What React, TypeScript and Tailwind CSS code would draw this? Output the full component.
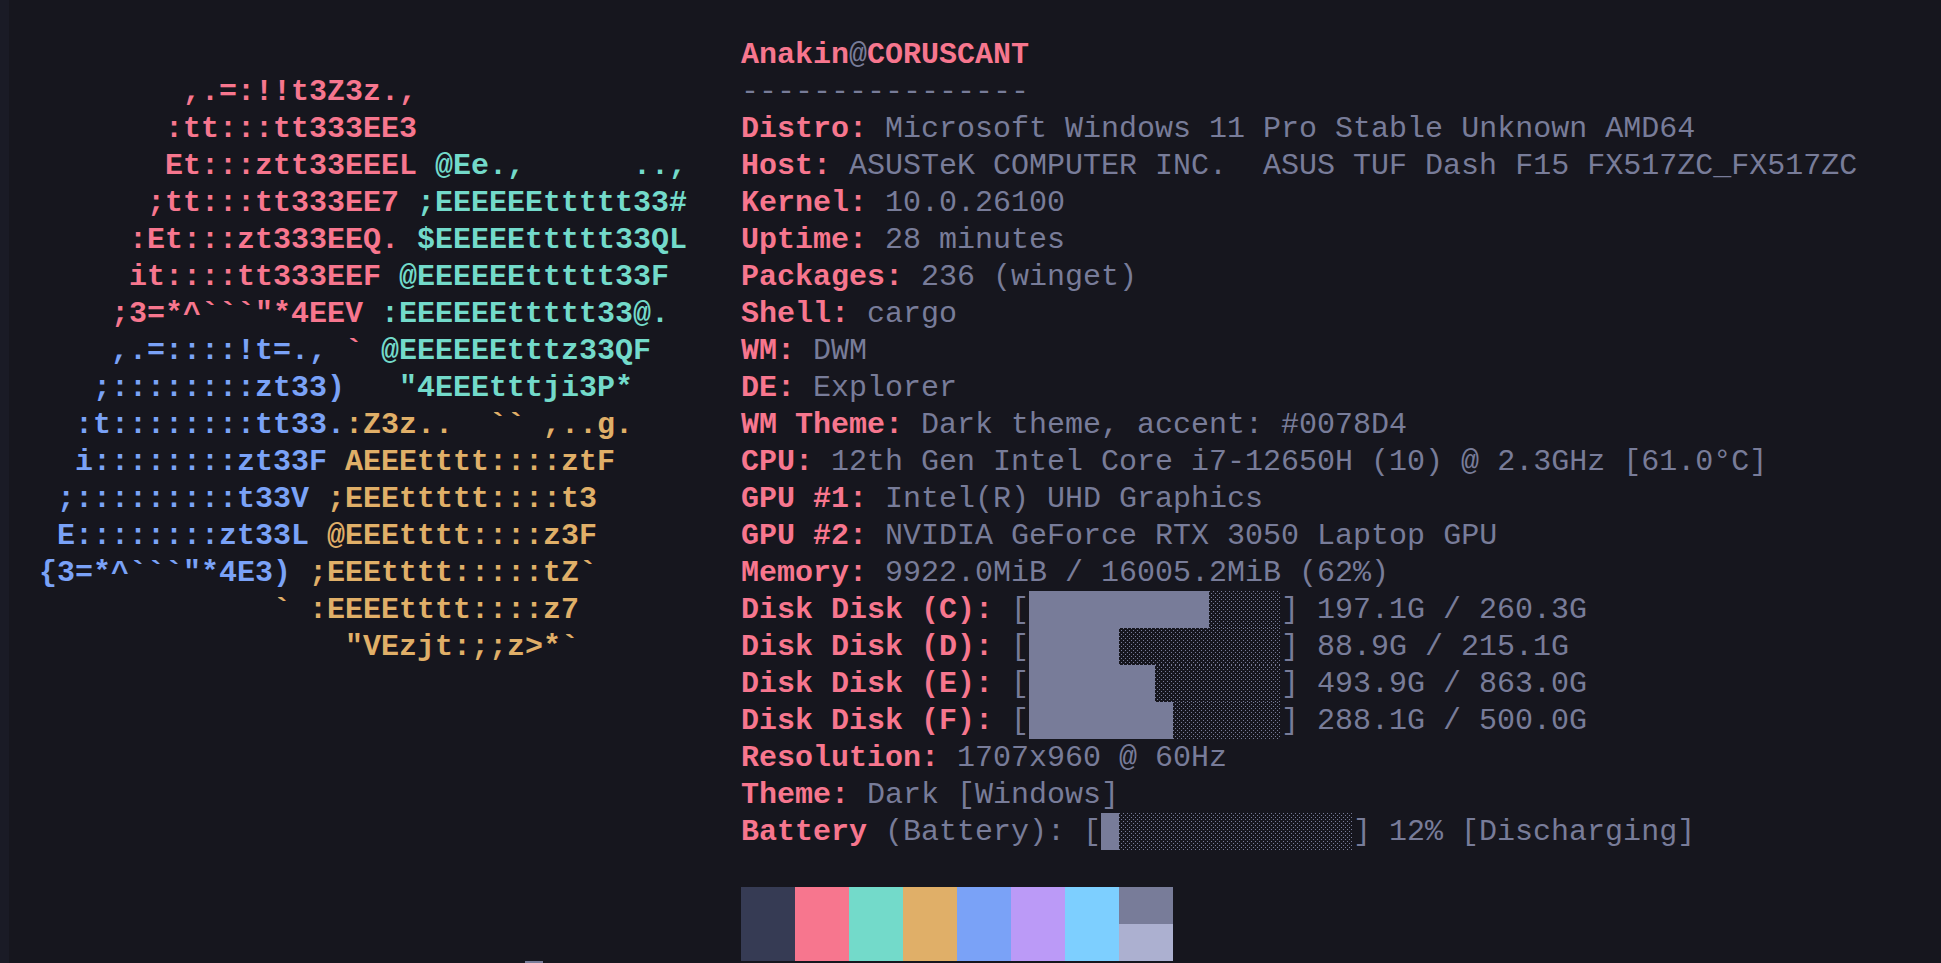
const mono = "font-['Liberation_Mono','DejaVu_Sans_Mono',monospace]";

const logo: { color: string; text: string }[][] = [
  [{ color: 'text-[#f7768e]', text: '        ,.=:!!t3Z3z.,' }],
  [{ color: 'text-[#f7768e]', text: '       :tt:::tt333EE3' }],
  [{ color: 'text-[#f7768e]', text: '       Et:::ztt33EEEL' }, { color: 'text-[#73daca]', text: ' @Ee.,      ..,' }],
  [{ color: 'text-[#f7768e]', text: '      ;tt:::tt333EE7' }, { color: 'text-[#73daca]', text: ' ;EEEEEEttttt33#' }],
  [{ color: 'text-[#f7768e]', text: '     :Et:::zt333EEQ.' }, { color: 'text-[#73daca]', text: ' $EEEEEttttt33QL' }],
  [{ color: 'text-[#f7768e]', text: '     it::::tt333EEF' }, { color: 'text-[#73daca]', text: ' @EEEEEEttttt33F' }],
  [{ color: 'text-[#f7768e]', text: '    ;3=*^```"*4EEV' }, { color: 'text-[#73daca]', text: ' :EEEEEEttttt33@.' }],
  [{ color: 'text-[#7aa2f7]', text: '    ,.=::::!t=.,' }, { color: 'text-[#f7768e]', text: ' `' }, { color: 'text-[#73daca]', text: ' @EEEEEEtttz33QF' }],
  [{ color: 'text-[#7aa2f7]', text: '   ;::::::::zt33)' }, { color: 'text-[#73daca]', text: '   "4EEEtttji3P*' }],
  [{ color: 'text-[#7aa2f7]', text: '  :t::::::::tt33.' }, { color: 'text-[#e0af68]', text: ':Z3z..  `` ,..g.' }],
  [{ color: 'text-[#7aa2f7]', text: '  i::::::::zt33F' }, { color: 'text-[#e0af68]', text: ' AEEEtttt::::ztF' }],
  [{ color: 'text-[#7aa2f7]', text: ' ;:::::::::t33V' }, { color: 'text-[#e0af68]', text: ' ;EEEttttt::::t3' }],
  [{ color: 'text-[#7aa2f7]', text: ' E::::::::zt33L' }, { color: 'text-[#e0af68]', text: ' @EEEtttt::::z3F' }],
  [{ color: 'text-[#7aa2f7]', text: '{3=*^```"*4E3)' }, { color: 'text-[#e0af68]', text: ' ;EEEtttt:::::tZ`' }],
  [{ color: 'text-[#e0af68]', text: '             ` :EEEEtttt::::z7' }],
  [{ color: 'text-[#e0af68]', text: '                 "VEzjt:;;z>*`' }],
];

const info = [
  ['Distro:', ' Microsoft Windows 11 Pro Stable Unknown AMD64'],
  ['Host:', ' ASUSTeK COMPUTER INC.  ASUS TUF Dash F15 FX517ZC_FX517ZC'],
  ['Kernel:', ' 10.0.26100'],
  ['Uptime:', ' 28 minutes'],
  ['Packages:', ' 236 (winget)'],
  ['Shell:', ' cargo'],
  ['WM:', ' DWM'],
  ['DE:', ' Explorer'],
  ['WM Theme:', ' Dark theme, accent: #0078D4'],
  ['CPU:', ' 12th Gen Intel Core i7-12650H (10) @ 2.3GHz [61.0°C]'],
  ['GPU #1:', ' Intel(R) UHD Graphics'],
  ['GPU #2:', ' NVIDIA GeForce RTX 3050 Laptop GPU'],
  ['Memory:', ' 9922.0MiB / 16005.2MiB (62%)'],
];

const disks = [
  { label: 'Disk Disk (C):', used: 10, size: '197.1G / 260.3G' },
  { label: 'Disk Disk (D):', used: 5, size: '88.9G / 215.1G' },
  { label: 'Disk Disk (E):', used: 7, size: '493.9G / 863.0G' },
  { label: 'Disk Disk (F):', used: 8, size: '288.1G / 500.0G' },
];

const swatches = ['bg-[#363b54]', 'bg-[#f7768e]', 'bg-[#73daca]', 'bg-[#e0af68]', 'bg-[#7aa2f7]', 'bg-[#bb9af7]', 'bg-[#7dcfff]'];

// text sits 1px lower than the centred line box, the bars don't
function Row({ children }: { children: React.ReactNode }) {
  return <div className="flex h-[37px] items-center whitespace-pre [&>span]:translate-y-px">{children}</div>;
}

function Key({ children }: { children: React.ReactNode }) {
  return <span className="font-bold text-[#f7768e]">{children}</span>;
}

function Bar({ used }: { used: number }) {
  return (
    <div className="flex h-[37px] w-[252px]">
      <div className="h-full bg-[#787c99]" style={{ width: used * 18 }} />
      <div className="h-full flex-1 bg-[radial-gradient(circle_at_0.5px_0.5px,#787c99_0.7px,transparent_0.8px),radial-gradient(circle_at_0.5px_0.5px,#787c99_0.7px,transparent_0.8px)] bg-[length:4px_4px] bg-[position:0_0,2px_2px]" />
    </div>
  );
}

export default function App() {
  return (
    <div className={`${mono} relative flex h-[963px] w-[1941px] overflow-hidden bg-[#16161e] text-[30px] leading-[37px] text-[#787c99]`}>
      <div className="w-[9px] shrink-0 bg-[#1a1b26]" />

      <div className="w-[732px] shrink-0 pl-[30px] pt-[73px] font-bold">
        {logo.map((line, i) => (
          <Row key={i}>
            {line.map((part, j) => (
              <span key={j} className={part.color}>{part.text}</span>
            ))}
          </Row>
        ))}
      </div>

      <div className="flex-1 pt-[36px]">
        <Row>
          <Key>Anakin</Key>
          <span>@</span>
          <Key>CORUSCANT</Key>
        </Row>
        <Row>
          <span>----------------</span>
        </Row>
        {info.map(([key, value]) => (
          <Row key={key}>
            <Key>{key}</Key>
            <span>{value}</span>
          </Row>
        ))}
        {disks.map((disk) => (
          <Row key={disk.label}>
            <Key>{disk.label}</Key>
            <span> [</span>
            <Bar used={disk.used} />
            <span>] {disk.size}</span>
          </Row>
        ))}
        <Row>
          <Key>Resolution:</Key>
          <span> 1707x960 @ 60Hz</span>
        </Row>
        <Row>
          <Key>Theme:</Key>
          <span> Dark [Windows]</span>
        </Row>
        <Row>
          <Key>Battery</Key>
          <span> (Battery): [</span>
          <Bar used={1} />
          <span>] 12% [Discharging]</span>
        </Row>
        <div className="mt-[37px] flex h-[74px]">
          {swatches.map((color) => (
            <div key={color} className={`w-[54px] ${color}`} />
          ))}
          <div className="w-[54px]">
            <div className="h-[37px] bg-[#787c99]" />
            <div className="h-[37px] bg-[#acb0d0]" />
          </div>
        </div>
      </div>

      {/* terminal cursor, only its top edge is on screen */}
      <div className="absolute left-[525px] top-[961px] h-[37px] w-[18px] bg-[#787c99]" />
    </div>
  );
}
